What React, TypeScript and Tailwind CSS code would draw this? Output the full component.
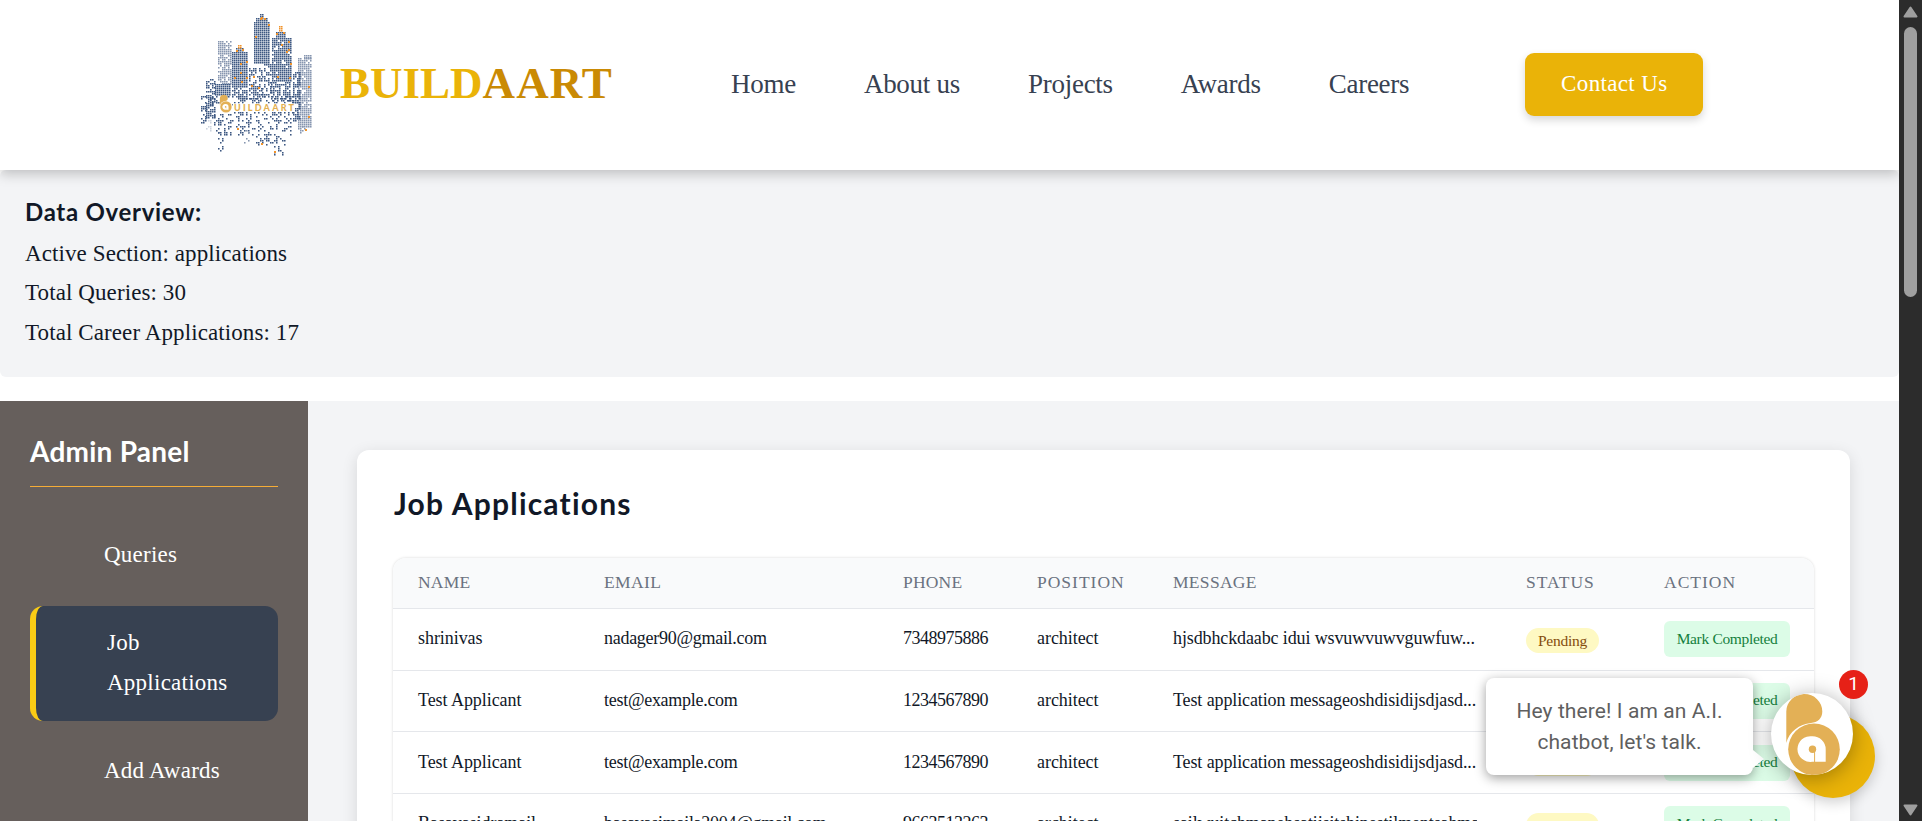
import type { ReactNode } from "react";

const INK = "#3d5781";
const PALE = "#8796b0";
const SPARK = "#f0932b";

type Block = {
  x: number;
  y: number;
  w: number;
  h: number;
  density: number;
  color?: string;
};

const BLOCKS: Block[] = [
  { x: 18, y: 31, w: 14, h: 44, density: 0.8, color: PALE },
  { x: 32, y: 42, w: 16, h: 36, density: 1 },
  { x: 36, y: 38, w: 8, h: 4, density: 1 },
  { x: 38, y: 35, w: 4, h: 3, density: 1, color: SPARK },
  { x: 32, y: 78, w: 16, h: 12, density: 0.7 },
  { x: 54, y: 12, w: 16, h: 42, density: 1 },
  { x: 56, y: 8, w: 12, h: 4, density: 1 },
  { x: 60, y: 4, w: 4, h: 4, density: 1 },
  { x: 62, y: 54, w: 9, h: 34, density: 0.55 },
  { x: 72, y: 28, w: 19, h: 44, density: 0.94 },
  { x: 76, y: 22, w: 10, h: 6, density: 1 },
  { x: 79, y: 16, w: 4, h: 6, density: 1, color: SPARK },
  { x: 71, y: 72, w: 20, h: 20, density: 0.7 },
  { x: 49, y: 58, w: 13, h: 32, density: 0.66 },
  { x: 98, y: 48, w: 14, h: 70, density: 0.88, color: PALE },
  { x: 104, y: 45, w: 8, h: 3, density: 1, color: PALE },
  { x: 93, y: 62, w: 7, h: 50, density: 0.66 },
  { x: 15, y: 74, w: 16, h: 12, density: 0.95 },
  { x: 6, y: 69, w: 9, h: 40, density: 0.68 },
  { x: 1, y: 86, w: 6, h: 28, density: 0.55 },
  { x: 10, y: 86, w: 84, h: 9, density: 0.38 },
  { x: 32, y: 102, w: 62, h: 10, density: 0.42 },
  { x: 14, y: 104, w: 18, h: 20, density: 0.28 },
  { x: 36, y: 112, w: 56, h: 14, density: 0.28 },
  { x: 18, y: 122, w: 13, h: 8, density: 0.36 },
  { x: 18, y: 130, w: 8, h: 12, density: 0.2 },
  { x: 54, y: 126, w: 34, h: 9, density: 0.32 },
  { x: 74, y: 134, w: 10, h: 11, density: 0.36 },
  { x: 44, y: 118, w: 5, h: 17, density: 0.25, color: PALE },
  { x: 6, y: 108, w: 6, h: 14, density: 0.45, color: "#cdd4de" },
  { x: 98, y: 116, w: 8, h: 10, density: 0.25, color: PALE },
];

const LIGHTS = [
  [40, 53], [46, 51], [40, 62], [34, 67], [46, 67], [41, 71],
  [55, 26], [68, 14], [61, 7], [60, 8], [64, 8],
  [88, 31], [81, 34], [88, 39], [86, 41], [90, 53], [77, 66], [89, 67],
  [76, 23], [83, 22], [36, 40], [42, 39], [53, 66], [58, 77], [51, 75],
  [108, 76], [108, 106], [37, 118], [61, 133], [74, 141], [105, 119],
];

function noise(a: number, b: number) {
  const v = Math.sin(a * 127.1 + b * 311.7) * 43758.5453;
  return v - Math.floor(v);
}

function Skyline() {
  const dots: ReactNode[] = [];
  BLOCKS.forEach((b, n) => {
    for (let y = b.y; y < b.y + b.h; y += 2) {
      for (let x = b.x; x < b.x + b.w; x += 2) {
        if (noise(x + n, y) > b.density) continue;
        dots.push(
          <rect
            key={`${n}-${x}-${y}`}
            x={x}
            y={y}
            width={1.55}
            height={1.55}
            fill={b.color ?? INK}
          />,
        );
      }
    }
  });
  return (
    <svg viewBox="0 0 114 150" className="h-[150px] w-[114px] shrink-0">
      {dots}
      {LIGHTS.map(([x, y]) => (
        <rect key={`l-${x}-${y}`} x={x} y={y} width={2} height={2} fill={SPARK} />
      ))}
      <rect x="33" y="93.500" width="62" height="8.500" fill="#fff" />
      <g transform="translate(16.5 84.5) scale(0.22)">
        <circle cx="43" cy="56.300" r="31" fill="#fff" />
        <Glyph />
      </g>
      <text
        x="34"
        y="101"
        fontFamily="Lato, sans-serif"
        fontWeight="900"
        fontSize="9"
        textLength="60"
        fill="#e3b052"
      >
        UILDAART
      </text>
    </svg>
  );
}

function Glyph() {
  return (
    <>
      <path
        d="M15.3 50V18.5A18 17.5 0 0 1 51.3 18.5C51.3 25.5 46.500 29.600 40 29.900C28.500 31 18 38.500 15.300 50Z"
        fill="#e3b056"
      />
      <circle cx="43" cy="56.300" r="25.800" fill="#e3b056" />
      <path
        d="M41.300 43.300A12.900 12.900 0 1 0 41.300 68.800H54.700V56.300A13.200 13 0 0 0 41.300 43.300Z"
        fill="#fff"
      />
      <circle cx="41.500" cy="56.300" r="3.700" fill="#e3b056" />
      <path d="M43.600 57V69" stroke="#e3b056" strokeWidth="1" />
    </>
  );
}

function Header() {
  return (
    <header className="relative z-10 flex h-[170px] shrink-0 items-center bg-white pl-[200px] shadow-[0_4px_12px_rgba(0,0,0,0.22)]">
      <Skyline />
      <div className="ml-[26px] w-[272px] pb-[3px] font-['Liberation_Serif',serif] text-[45px] leading-none font-bold whitespace-nowrap">
        <span className="tracking-[0px] text-[#eab308]">BUILD</span>
        <span className="tracking-[1.1px] text-[#ca8a04]">AART</span>
      </div>
      <nav className="ml-[119px] flex gap-[68px] pb-px text-[27px] leading-none tracking-[-0.27px] whitespace-nowrap text-[#374151]">
        <a>Home</a>
        <a>About us</a>
        <a>Projects</a>
        <a>Awards</a>
        <a>Careers</a>
      </nav>
      <button className="mb-px ml-[116px] h-[63px] w-[178px] rounded-[9px] bg-[#eab308] pb-px text-[23px] tracking-[0.35px] text-white shadow-[0_4px_8px_rgba(0,0,0,0.16)]">
        Contact Us
      </button>
    </header>
  );
}

function Overview() {
  return (
    <section className="h-[207px] shrink-0 rounded-[6px] bg-[#f3f4f6] pt-[24px] pl-[25px] text-[23px] leading-[39.4px] tracking-[0.1px] text-[#111827]">
      <h2 className="mb-[4px] font-[Lato,sans-serif] text-[24px] leading-[36px] font-bold tracking-[0.7px]">
        Data Overview:
      </h2>
      <p>Active Section: applications</p>
      <p>Total Queries: 30</p>
      <p>Total Career Applications: 17</p>
    </section>
  );
}

function Sidebar() {
  return (
    <aside className="w-[308px] shrink-0 bg-[#665f5c] px-[30px] pt-[29px] text-[23px] tracking-[0.25px] text-white">
      <h2 className="h-[57px] border-b border-[#f6ad37] font-[Lato,sans-serif] text-[28px] leading-[42px] font-bold">
        Admin Panel
      </h2>
      <ul className="mt-[32px] flex flex-col gap-[12px] leading-[40px]">
        <li className="h-[75px] pt-[16px] pl-[74px]">Queries</li>
        <li className="h-[115px] rounded-[13px] border-l-[6px] border-[#facc15] bg-[#374151] pt-[17px] pl-[71px]">
          Job
          <br />
          Applications
        </li>
        <li className="h-[75px] pt-[18px] pl-[74px]">Add Awards</li>
      </ul>
    </aside>
  );
}

const ROWS = [
  {
    name: "shrinivas",
    email: "nadager90@gmail.com",
    phone: "7348975886",
    message: "hjsdbhckdaabc idui wsvuwvuwvguwfuw...",
  },
  {
    name: "Test Applicant",
    email: "test@example.com",
    phone: "1234567890",
    message: "Test application messageoshdisidijsdjasd...",
  },
  {
    name: "Test Applicant",
    email: "test@example.com",
    phone: "1234567890",
    message: "Test application messageoshdisidijsdjasd...",
  },
  {
    name: "Basavasidramail",
    email: "basavasimaila2004@gmail.com",
    phone: "9663513263",
    message: "sailwuitchmanehsatijsitshinestilmentsahmah...",
  },
];

function Table() {
  return (
    <div className="w-[1421px] overflow-hidden rounded-t-[13px] shadow-[0_0_3px_rgba(0,0,0,0.16)]">
      <div className="grid h-[51px] grid-cols-[186px_299px_134px_136px_353px_138px_175px] border-b border-[#e5e7eb] bg-[#f9fafb] pt-[12px] text-[17.500px] leading-[25px] tracking-[1px] text-[#6b7280] *:pl-[25px]">
        <span className="tracking-[0.2px]">NAME</span>
        <span className="tracking-[0.4px]">EMAIL</span>
        <span className="tracking-[0.2px]">PHONE</span>
        <span>POSITION</span>
        <span className="tracking-[0.3px]">MESSAGE</span>
        <span>STATUS</span>
        <span>ACTION</span>
      </div>
      {ROWS.map((r, i) => (
        <div
          key={i}
          className="grid h-[61.670px] grid-cols-[186px_299px_134px_136px_353px_138px_175px] items-center border-b border-[#e5e7eb] text-[18px] leading-[25px] whitespace-nowrap text-[#111827] *:pl-[25px]"
        >
          <span className="pb-px tracking-[-0.06px]">{r.name}</span>
          <span className="pb-px tracking-[-0.28px]">{r.email}</span>
          <span className="pb-px tracking-[-0.5px]">{r.phone}</span>
          <span className="pb-px tracking-[-0.05px]">architect</span>
          <span className="w-[329px] overflow-hidden pb-px tracking-[-0.12px]">
            {r.message}
          </span>
          <div className="pt-[2px]">
            <span className="flex h-[25px] w-[73px] items-center justify-center rounded-full bg-[#fef9c3] text-[15.500px] tracking-[-0.25px] text-[#854d0e]">
              Pending
            </span>
          </div>
          <div>
            <span className="flex h-[36px] w-[126px] items-center justify-center rounded-[6px] bg-[#dcfce7] pb-[2px] text-[15.500px] tracking-[-0.34px] text-[#15803d]">
              Mark Completed
            </span>
          </div>
        </div>
      ))}
    </div>
  );
}

function ChatWidget() {
  return (
    <div className="absolute top-[668px] left-[1486px] z-20 h-[132px] w-[392px]">
      <div className="absolute top-[46px] left-[305px] size-[84px] rounded-full bg-[#eab308] shadow-[0_4px_14px_rgba(0,0,0,0.2)]" />
      <div className="absolute top-[10px] left-0 flex h-[97px] w-[267px] items-center justify-center rounded-[8px] bg-white text-center font-[Roboto,sans-serif] text-[21px] leading-[31px] tracking-[0.09px] text-[#5f5f5f] shadow-[0_3px_12px_rgba(0,0,0,0.38)]">
        <p>
          Hey there! I am an A.I.
          <br />
          chatbot, let's talk.
        </p>
      </div>
      <svg
        viewBox="0 0 11 18"
        className="absolute top-[82px] left-[267px] h-[18px] w-[11px]"
      >
        <path d="M0 0L11 9L0 18Z" fill="#fff" />
      </svg>
      <div className="absolute top-[25px] left-[285px] size-[82px] overflow-hidden rounded-full bg-white shadow-[0_3px_22px_rgba(0,0,0,0.34)]">
        <svg viewBox="0 0 82 82" className="size-full">
          <Glyph />
        </svg>
      </div>
      <div className="absolute top-[2px] left-[353px] flex size-[29px] items-center justify-center rounded-full bg-[#e62117] font-[Roboto,sans-serif] text-[19px] text-white">
        1
      </div>
    </div>
  );
}

function Scrollbar() {
  return (
    <div className="flex h-full w-[23px] shrink-0 flex-col items-center bg-[#2c2c2c] pt-[6px] pb-[5px]">
      <svg viewBox="0 0 15 12" className="h-[12px] w-[15px]">
        <path
          d="M7.500 1.500L13.500 10.500H1.500Z"
          fill="#9f9f9f"
          stroke="#9f9f9f"
          strokeWidth="2"
          strokeLinejoin="round"
        />
      </svg>
      <div className="mt-[9px] h-[270px] w-[13px] rounded-full bg-[#9f9f9f]" />
      <svg viewBox="0 0 15 12" className="mt-auto h-[12px] w-[15px]">
        <path
          d="M7.500 10.500L13.500 1.500H1.500Z"
          fill="#9f9f9f"
          stroke="#9f9f9f"
          strokeWidth="2"
          strokeLinejoin="round"
        />
      </svg>
    </div>
  );
}

export default function App() {
  return (
    <div className="relative flex h-[821px] w-[1922px] overflow-hidden bg-white font-['Liberation_Serif',serif]">
      <div className="flex min-w-0 flex-1 flex-col overflow-hidden">
        <Header />
        <Overview />
        <div className="mt-[24px] flex min-h-0 flex-1 overflow-hidden">
          <Sidebar />
          <main className="flex-1 bg-[#f3f4f6] pt-[49px] pl-[49px]">
            <div className="h-[700px] w-[1493px] rounded-[12px] bg-white pt-[33px] pl-[36px] shadow-[0_4px_16px_rgba(0,0,0,0.12)]">
              <h1 className="mb-[30px] ml-px h-[45px] font-[Lato,sans-serif] text-[30px] leading-[40px] font-bold tracking-[1.2px] text-[#111827]">
                Job Applications
              </h1>
              <Table />
            </div>
          </main>
        </div>
      </div>
      <Scrollbar />
      <ChatWidget />
    </div>
  );
}
